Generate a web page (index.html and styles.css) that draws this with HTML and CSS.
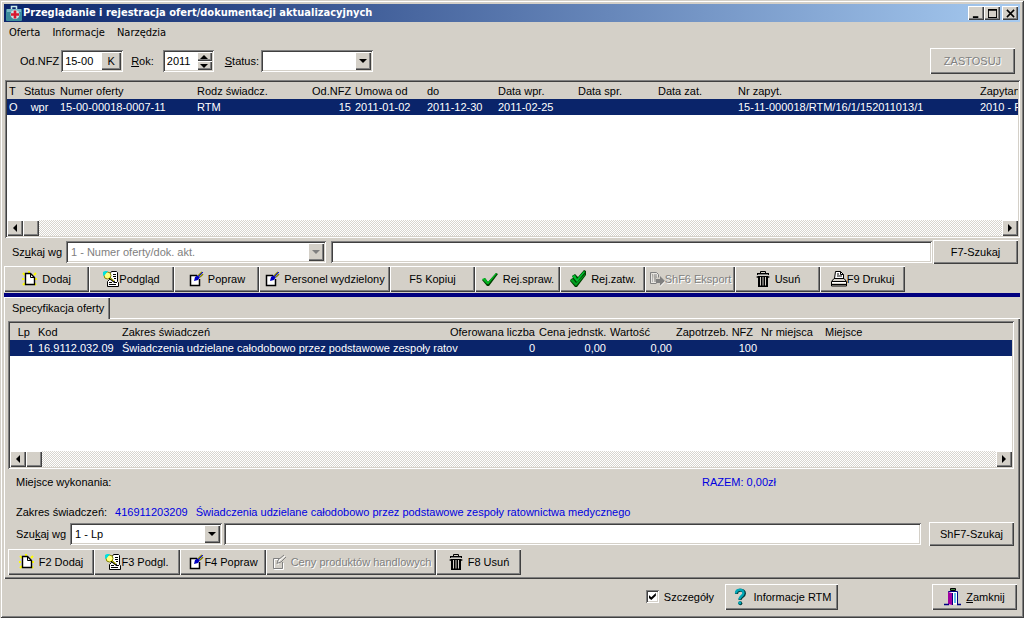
FILE: index.html
```html
<!DOCTYPE html>
<html lang="pl">
<head>
<meta charset="utf-8">
<title>Przeglądanie i rejestracja ofert/dokumentacji aktualizacyjnych</title>
<link rel="stylesheet" href="styles.css">
</head>
<body>
<svg class="sprite" aria-hidden="true">
  <symbol id="i-new" viewBox="0 0 16 16">
    <path d="M1 2l2 2M0 8h2M1 14l2-2M14 2l-2 2M15 8h-2M14 14l-2-2M7 0v2" stroke="#ffff00" stroke-width="2"/>
    <path d="M3.500 2.500h5l4 4v7h-9z" fill="#fff" stroke="#000" stroke-width="1.400"/>
    <path d="M8.500 2.500v4h4" fill="none" stroke="#000"/>
  </symbol>
  <symbol id="i-view" viewBox="0 0 16 16">
    <path d="M6.500 3.500l2-3h5l1 1v9l1 1v4h-11v-5l2-2z" fill="#fff" stroke="#000"/>
    <path d="M10 3.500h3M10 5.500h3M11 7.500h2M6 11.500h3M6 13.500h7M11 11.500h3" stroke="#000"/>
    <circle cx="4.500" cy="4.500" r="3.500" fill="#ffff80" stroke="#808000"/>
    <path d="M0 4V1l2-1h3L1 5z" fill="#00e0e0"/>
    <path d="M6.500 7l5 4" stroke="#000" stroke-width="2"/>
    <path d="M6 6l5 4" stroke="#e8e800"/>
  </symbol>
  <symbol id="i-edit" viewBox="0 0 16 16">
    <path d="M8.500 4.500h-6v10h9V9" fill="#fff"/>
    <path d="M9 4.500H2.500v10h9V8" fill="none" stroke="#000" stroke-width="1.500"/>
    <path d="M6 10l1-4 3-2 2 2-2 3z" fill="#0000c0"/>
    <path d="M10 5l4-4M12 6l3-3" stroke="#808000" stroke-width="1.500"/>
    <path d="M11 5l4-4" stroke="#0000ff"/>
  </symbol>
  <symbol id="i-edit-off" viewBox="0 0 16 16">
    <path d="M10 5.500H3.500v10h9V9M7 11l1-4 6-5" fill="none" stroke="#fff"/>
    <path d="M9 4.500H2.500v10h9V8M6 10l1-4 6-5M7 9l3-1 5-5" fill="none" stroke="#808080"/>
  </symbol>
  <symbol id="i-check" viewBox="0 0 18 16">
    <path d="M1 9l3-2 3 4 8-9 2 1-9 12H6z" fill="#004000"/>
    <path d="M1 8l3-1 3 4 8-9 1 .5L7.500 13H6z" fill="#00b820"/>
  </symbol>
  <symbol id="i-check2" viewBox="0 0 18 18">
    <path d="M3 6l3-2 3 3 6-7 2 1v4L8 17H6L1 11l1-2 2-1z" fill="#004000"/>
    <path d="M3 6l3-1 2 4 7-8 1 1-8 10z" fill="#00c030"/>
    <path d="M1 10l3-1 3 4 9-9v1L7 16z" fill="#00a020"/>
  </symbol>
  <symbol id="i-export" viewBox="0 0 16 16">
    <path d="M1.500 1.500h6l2 2v3M1.500 1.500v11h6" fill="#e8e6e2" stroke="#808080"/>
    <path d="M3 4h1M5 4h3M3 6h1M5 6h3M3 8h1M5 8h2M3 10h1M5 10h2" stroke="#808080"/>
    <path d="M7 8h4V5l5 5-5 5v-3H7z" fill="#808080"/>
    <path d="M11 15.500L16.500 10" stroke="#fff"/>
  </symbol>
  <symbol id="i-trash" viewBox="0 0 14 16">
    <path d="M4.500 2V.500h5V2" fill="none" stroke="#000"/>
    <path d="M1 2h12v2H1zM0 6l2-1v2zM14 6l-2-1v2zM2 5h10v11H2z" fill="#000"/>
    <path d="M2 3.500h10" stroke="#808080"/>
    <path d="M4.500 6v8.500M7 6v8.500M9.500 6v8.500" stroke="#d4d0c8"/>
  </symbol>
  <symbol id="i-print" viewBox="0 0 16 16">
    <path d="M3.500 7.500l1-7h5l3 3v4z" fill="#fff" stroke="#000"/>
    <path d="M6 3h2M6 5h5" stroke="#000"/>
    <path d="M9.500.500v3h3" fill="none" stroke="#000"/>
    <path d="M3 7.500h10l2.500 3v4.500H.500v-4.500z" fill="#d4d0c8" stroke="#000"/>
    <path d="M1 10.500h14M1 13.500h14" stroke="#000"/>
    <path d="M1 11.500h14" stroke="#fff"/>
  </symbol>
  <symbol id="i-help" viewBox="0 0 12 18">
    <path d="M2.500 6c0-5 8-5 8-.5C10.500 8.500 6 8.500 6 12" fill="none" stroke="#003838" stroke-width="3"/>
    <path d="M2 5.500c0-5 7.500-5 7.500-.5C9.500 8 5.500 8 5.500 11.500" fill="none" stroke="#00a8b8" stroke-width="2.400"/>
    <circle cx="6.300" cy="15.300" r="2" fill="#003838"/>
    <circle cx="5.800" cy="14.800" r="1.600" fill="#00a8b8"/>
  </symbol>
  <symbol id="i-door" viewBox="0 0 18 18">
    <path d="M6.500 .500h5v2h-5z" fill="#408040" stroke="#000"/>
    <path d="M4.500 16.500v-13h9v13" fill="#fff" stroke="#000080"/>
    <path d="M4 4l4 1v12l-4-1z" fill="#a000a0"/>
    <path d="M8.500 5v12" stroke="#000080"/>
    <path d="M11 5v10" stroke="#60c0e8" stroke-width="2"/>
    <path d="M0 16.500h5M13 16.500h4" stroke="#000080" stroke-width="1.500"/>
  </symbol>
  <symbol id="i-app" viewBox="0 0 16 16">
    <path d="M5.500 4V1.500h5V4" fill="none" stroke="#c8e8e8" stroke-width="1.500"/>
    <rect x="0" y="4" width="16" height="12" rx="1" fill="#3c8c9c"/>
    <rect x="1" y="4" width="14" height="3" fill="#78b8c4"/>
    <circle cx="9" cy="9.500" r="4.500" fill="#d0e0e4"/>
    <path d="M9 5.500v8M5 9.500h8" stroke="#d81830" stroke-width="2.600"/>
  </symbol>
  <symbol id="i-left" viewBox="0 0 8 8"><path d="M6 0v8L2 4z"/></symbol>
  <symbol id="i-right" viewBox="0 0 8 8"><path d="M2 0v8l4-4z"/></symbol>
  <symbol id="i-down" viewBox="0 0 8 8"><path d="M0 2h8L4 6z"/></symbol>
  <symbol id="i-up" viewBox="0 0 8 8"><path d="M0 6h8L4 2z"/></symbol>
</svg>

<div class="window">
  <header class="titlebar">
    <svg class="ico"><use href="#i-app"/></svg>
    <h1>Przeglądanie i rejestracja ofert/dokumentacji aktualizacyjnych</h1>
    <div class="caption-buttons">
      <button class="cap" aria-label="Minimalizuj"><svg viewBox="0 0 12 10"><path d="M2 8h6v2H2z"/></svg></button>
      <button class="cap" aria-label="Maksymalizuj"><svg viewBox="0 0 12 10"><path d="M1 0h10v10H1zM2 2v7h8V2z" fill-rule="evenodd"/></svg></button>
      <button class="cap close" aria-label="Zamknij okno"><svg viewBox="0 0 12 10"><path d="M2 1l8 8M10 1L2 9" stroke="#000" stroke-width="1.700"/></svg></button>
    </div>
  </header>

  <nav class="menu">
    <button>Oferta</button><button>Informacje</button><button>Narzędzia</button>
  </nav>

  <form class="filters">
    <label for="nfz">Od.NFZ</label>
    <div class="field nfz"><input id="nfz" value="15-00"><button type="button" class="btn">K</button></div>
    <label for="rok"><u>R</u>ok:</label>
    <div class="field rok"><input id="rok" value="2011">
      <span class="spin"><button type="button" class="btn" aria-label="Więcej"><svg><use href="#i-up"/></svg></button><button type="button" class="btn" aria-label="Mniej"><svg><use href="#i-down"/></svg></button></span>
    </div>
    <label for="status"><u>S</u>tatus:</label>
    <div class="field combo status"><select id="status"><option></option></select><span class="btn arrow"><svg><use href="#i-down"/></svg></span></div>
    <button type="button" class="btn wide push" disabled>ZASTOSUJ</button>
  </form>

  <section class="list upper">
    <div class="viewport">
      <table class="offers">
        <colgroup><col class="w14"><col class="w37"><col class="w137"><col class="w115"><col class="w43"><col class="w72"><col class="w71"><col class="w80"><col class="w80"><col class="w80"><col class="w242"><col class="w120"></colgroup>
        <thead><tr><th>T</th><th class="c">Status</th><th>Numer oferty</th><th>Rodz świadcz.</th><th class="r">Od.NFZ</th><th>Umowa od</th><th>do</th><th>Data wpr.</th><th>Data spr.</th><th>Data zat.</th><th>Nr zapyt.</th><th>Zapytanie</th></tr></thead>
        <tbody><tr><td>O</td><td class="c">wpr</td><td>15-00-00018-0007-11</td><td>RTM</td><td class="r">15</td><td>2011-01-02</td><td>2011-12-30</td><td>2011-02-25</td><td></td><td></td><td>15-11-000018/RTM/16/1/152011013/1</td><td>2010 - RTM</td></tr></tbody>
      </table>
    </div>
    <div class="scroll"><button class="btn" aria-label="W lewo"><svg><use href="#i-left"/></svg></button><span class="btn thumb"></span><button class="btn push" aria-label="W prawo"><svg><use href="#i-right"/></svg></button></div>
  </section>

  <form class="search">
    <label for="by1">Sz<u>u</u>kaj wg</label>
    <div class="field combo by1"><select id="by1" disabled><option>1 - Numer oferty/dok. akt.</option></select><span class="btn arrow off"><svg><use href="#i-down"/></svg></span></div>
    <div class="field grow"><input aria-label="Szukany tekst oferty"></div>
    <button type="button" class="btn wide">F7-Szukaj</button>
  </form>

  <div class="toolbar">
    <button class="btn"><svg class="ico"><use href="#i-new"/></svg>Dodaj</button>
    <button class="btn tight"><svg class="ico"><use href="#i-view"/></svg>Podgląd</button>
    <button class="btn"><svg class="ico"><use href="#i-edit"/></svg>Popraw</button>
    <button class="btn w131"><svg class="ico"><use href="#i-edit"/></svg>Personel wydzielony</button>
    <button class="btn">F5 Kopiuj</button>
    <button class="btn"><svg class="ico big"><use href="#i-check"/></svg>Rej.spraw.</button>
    <button class="btn"><svg class="ico big"><use href="#i-check2"/></svg>Rej.zatw.</button>
    <button class="btn w90 tight" disabled><svg class="ico"><use href="#i-export"/></svg>ShF6 Eksport</button>
    <button class="btn"><svg class="ico"><use href="#i-trash"/></svg>Usuń</button>
    <button class="btn tight"><svg class="ico"><use href="#i-print"/></svg>F9 Drukuj</button>
  </div>

  <div class="tabs"><button class="tab">Specyfikacja oferty</button></div>

  <main class="panel">
    <section class="list lower">
      <div class="viewport">
        <table class="items">
          <colgroup><col class="w26"><col class="w84"><col class="w330"><col class="w87"><col class="w71"><col class="w66"><col class="w85"><col class="w64"><col class="w190"></colgroup>
          <thead><tr><th class="r lp">Lp</th><th>Kod</th><th>Zakres świadczeń</th><th class="r full">Oferowana liczba</th><th>Cena jednstk.</th><th>Wartość</th><th>Zapotrzeb. NFZ</th><th>Nr miejsca</th><th>Miejsce</th></tr></thead>
          <tbody><tr><td class="r">1</td><td>16.9112.032.09</td><td class="spill">Świadczenia udzielane całodobowo przez podstawowe zespoły ratov</td><td class="r">0</td><td class="r">0,00</td><td class="r">0,00</td><td class="r">100</td><td></td><td></td></tr></tbody>
        </table>
      </div>
      <div class="scroll"><button class="btn" aria-label="W lewo"><svg><use href="#i-left"/></svg></button><span class="btn thumb"></span><button class="btn push" aria-label="W prawo"><svg><use href="#i-right"/></svg></button></div>
    </section>

    <div class="info place"><span>Miejsce wykonania:</span><span class="blue total">RAZEM: 0,00zł</span></div>
    <div class="info"><span>Zakres świadczeń:</span><span class="blue">416911203209</span><span class="blue">Świadczenia udzielane całodobowo przez podstawowe zespoły ratownictwa medycznego</span></div>

    <form class="search">
      <label for="by2">Szu<u>k</u>aj wg</label>
      <div class="field combo by2"><select id="by2"><option>1 - Lp</option></select><span class="btn arrow"><svg><use href="#i-down"/></svg></span></div>
      <div class="field grow"><input aria-label="Szukany tekst pozycji"></div>
      <button type="button" class="btn wide">ShF7-Szukaj</button>
    </form>

    <div class="toolbar">
      <button class="btn"><svg class="ico"><use href="#i-new"/></svg>F2 Dodaj</button>
      <button class="btn tight"><svg class="ico"><use href="#i-view"/></svg>F3 Podgl.</button>
      <button class="btn tight"><svg class="ico"><use href="#i-edit"/></svg>F4 Popraw</button>
      <button class="btn w170" disabled><svg class="ico"><use href="#i-edit-off"/></svg>Ceny produktów handlowych</button>
      <button class="btn"><svg class="ico"><use href="#i-trash"/></svg>F8 Usuń</button>
    </div>
  </main>

  <footer class="bottom">
    <label class="check"><input type="checkbox" checked>Szczegóły</label>
    <button class="btn w112"><svg class="ico big"><use href="#i-help"/></svg>Informacje RTM</button>
    <button class="btn wide"><svg class="ico big"><use href="#i-door"/></svg><span><u>Z</u>amknij</span></button>
  </footer>
</div>
</body>
</html>
```
FILE: styles.css
```css
:root {
  --face: #d4d0c8;
  --shade: #808080;
  --dark: #404040;
  --navy: #0a246a;
}
* { box-sizing: border-box; }
body {
  margin: 0;
  background: var(--face);
  color: #000;
  font: 11px/14px "Liberation Sans", Arial, sans-serif;
}
button, input, select { font: inherit; color: inherit; margin: 0; padding: 0; border: 0; border-radius: 0; }
form { margin: 0; }
.sprite { display: none; }
.window {
  display: flex;
  flex-direction: column;
  min-height: 100vh;
  padding: 4px;
  box-shadow: inset 1px 1px var(--face), inset -1px -1px var(--dark), inset 2px 2px #fff, inset -2px -2px var(--shade);
}

.titlebar {
  display: flex;
  align-items: center;
  height: 18px;
  padding: 0 2px;
  background: linear-gradient(to right, var(--navy), #a6caf0);
  color: #fff;
}
.titlebar h1 { margin: 0 0 0 1px; flex: 1; font: bold 11px/14px "DejaVu Sans Condensed", "Noto Sans", sans-serif; white-space: nowrap; }
.caption-buttons { display: flex; }
.cap {
  display: grid;
  place-items: center;
  width: 16px;
  height: 14px;
  background: var(--face);
  box-shadow: inset 1px 1px #fff, inset -1px -1px var(--dark), inset -2px -2px var(--shade);
}
.cap svg { width: 11px; height: 9px; }
.close { margin-left: 2px; }

.menu { display: flex; gap: 12px; height: 20px; padding: 1px 0 0 5px; }
.menu button { background: none; font: 11px/14px "DejaVu Sans Condensed", "Noto Sans", sans-serif; }

.filters { display: flex; align-items: center; height: 38px; padding: 0 5px 0 16px; }
.filters label { padding-right: 2px; white-space: nowrap; }
.field {
  display: flex;
  height: 22px;
  padding: 2px;
  background: #fff;
  box-shadow: inset 1px 1px var(--shade), inset -1px -1px #fff, inset 2px 2px var(--dark), inset -2px -2px var(--face);
}
.field input { flex: 1; min-width: 0; width: 0; padding-left: 2px; background: none; outline: 0; }
.nfz { width: 62px; margin-right: 8px; }
.nfz .btn { width: 20px; }
.rok { width: 51px; margin-left: 7px; margin-right: 11px; }
.status { width: 112px; }
.spin { display: flex; flex-direction: column; width: 15px; }
.spin .btn { flex: 1; min-height: 0; }
.combo { position: relative; }
.combo select { appearance: none; width: 100%; padding: 0 20px 0 3px; background: none; outline: 0; opacity: 1; }
.combo select:disabled { color: var(--shade); }
.arrow { position: absolute; top: 2px; right: 2px; bottom: 2px; width: 16px; pointer-events: none; }
.off { fill: var(--shade); }
.push { margin-left: auto; }
.grow { flex: 1; }

.btn {
  display: flex;
  align-items: center;
  justify-content: center;
  gap: 4px;
  background: var(--face);
  white-space: nowrap;
  box-shadow: inset 1px 1px #fff, inset -1px -1px var(--dark), inset -2px -2px var(--shade);
}
.btn svg { width: 8px; height: 8px; flex: none; }
.btn svg.ico, .ico { width: 16px; height: 16px; }
.btn svg.big { width: 18px; height: 18px; }
.btn:disabled { color: var(--shade); text-shadow: 1px 1px #fff; }
.tight { gap: 0; }
.wide { width: 85px; height: 26px; }

.list {
  display: flex;
  flex-direction: column;
  flex: 1 0 auto;
  padding: 2px;
  background: #fff;
  box-shadow: inset 1px 1px var(--shade), inset -1px -1px #fff, inset 2px 2px var(--dark), inset -2px -2px var(--face);
}
.upper { min-height: 158px; margin-left: 1px; }
.lower { min-height: 148px; }
.viewport { flex: 1; width: 100%; overflow: hidden; }
table { table-layout: fixed; border-collapse: collapse; }
.offers { width: 1091px; }
.items { width: 100%; min-width: 1003px; }
th, td { height: 16px; padding: 0 2px; font-weight: normal; text-align: left; line-height: 16px; white-space: nowrap; overflow: hidden; }
th { height: 17px; background: var(--face); }
tbody tr { background: var(--navy); color: #fff; }
.r { text-align: right; }
.c { text-align: center; }
.lp { padding-right: 6px; }
.full { padding-left: 0; }
.spill { overflow: visible; }
.w14 { width: 14px; } .w37 { width: 37px; } .w137 { width: 137px; } .w115 { width: 115px; }
.w43 { width: 43px; } .w72 { width: 72px; } .w80 { width: 80px; } .w242 { width: 242px; } .w120 { width: 120px; }
.w26 { width: 26px; } .w84 { width: 84px; } .w330 { width: 330px; } .w87 { width: 87px; } .w71 { width: 71px; }
.w66 { width: 66px; } .w85 { width: 85px; } .w64 { width: 64px; } .w190 { width: 190px; }
.scroll { display: flex; height: 16px; background: repeating-conic-gradient(#fff 0 25%, #d8d5ce 0 50%) 0 0 / 2px 2px; }
.scroll .btn { width: 16px; }

.search { display: flex; align-items: center; gap: 5px; height: 26px; padding: 0 2px 0 8px; }
.upper + .search { margin: 1px 0; }
.search label { width: 49px; white-space: nowrap; }
.by1 { width: 260px; }
.search .wide { height: 24px; margin-left: -4px; }

.toolbar { display: flex; }
.toolbar .btn { width: 85px; height: 26px; }
.toolbar .w131 { width: 131px; }
.toolbar .w90 { width: 90px; }
.toolbar .w170 { width: 170px; }

.tabs { display: flex; height: 25px; margin-top: 1px; border-top: 4px solid #000080; }
.tab {
  z-index: 1;
  margin-bottom: -1px;
  padding: 0 6px 0 8px;
  background: var(--face);
  box-shadow: inset 1px 1px #fff, inset -1px 0 var(--dark), inset -2px 0 var(--shade);
}
.panel {
  display: flex;
  flex-direction: column;
  flex: 1 0 auto;
  padding: 3px 6px 4px 4px;
  box-shadow: inset 1px 1px #fff, inset -1px -1px var(--dark), inset -2px -2px var(--shade);
}
.info { display: flex; gap: 8px; padding-left: 8px; white-space: nowrap; }
.place { display: grid; grid-template-columns: 678px auto; margin: 6px 0 16px; }
.blue { color: #0000e0; }
.panel .search { padding: 0; gap: 2px; height: 24px; margin: 3px 0; }
.panel .search label { width: 60px; padding-left: 8px; }
.panel .search .wide { margin-left: 6px; }
.by2 { width: 152px; }
.panel .toolbar .btn:nth-child(-n+3) { width: 86px; }

.bottom { display: flex; align-items: center; justify-content: flex-end; height: 35px; padding-right: 3px; }
.check { display: flex; align-items: center; gap: 5px; margin-right: 11px; }
.check input {
  appearance: none;
  display: grid;
  place-items: center;
  width: 13px;
  height: 13px;
  background: #fff;
  box-shadow: inset 1px 1px var(--shade), inset -1px -1px #fff, inset 2px 2px var(--dark), inset -2px -2px var(--face);
}
.check input:checked::before {
  content: "";
  width: 7px;
  height: 7px;
  background: #000;
  clip-path: polygon(0 30%, 35% 60%, 100% 0, 100% 40%, 35% 100%, 0 70%);
}
.w112 { width: 113px; height: 26px; margin-right: 94px; }
```
